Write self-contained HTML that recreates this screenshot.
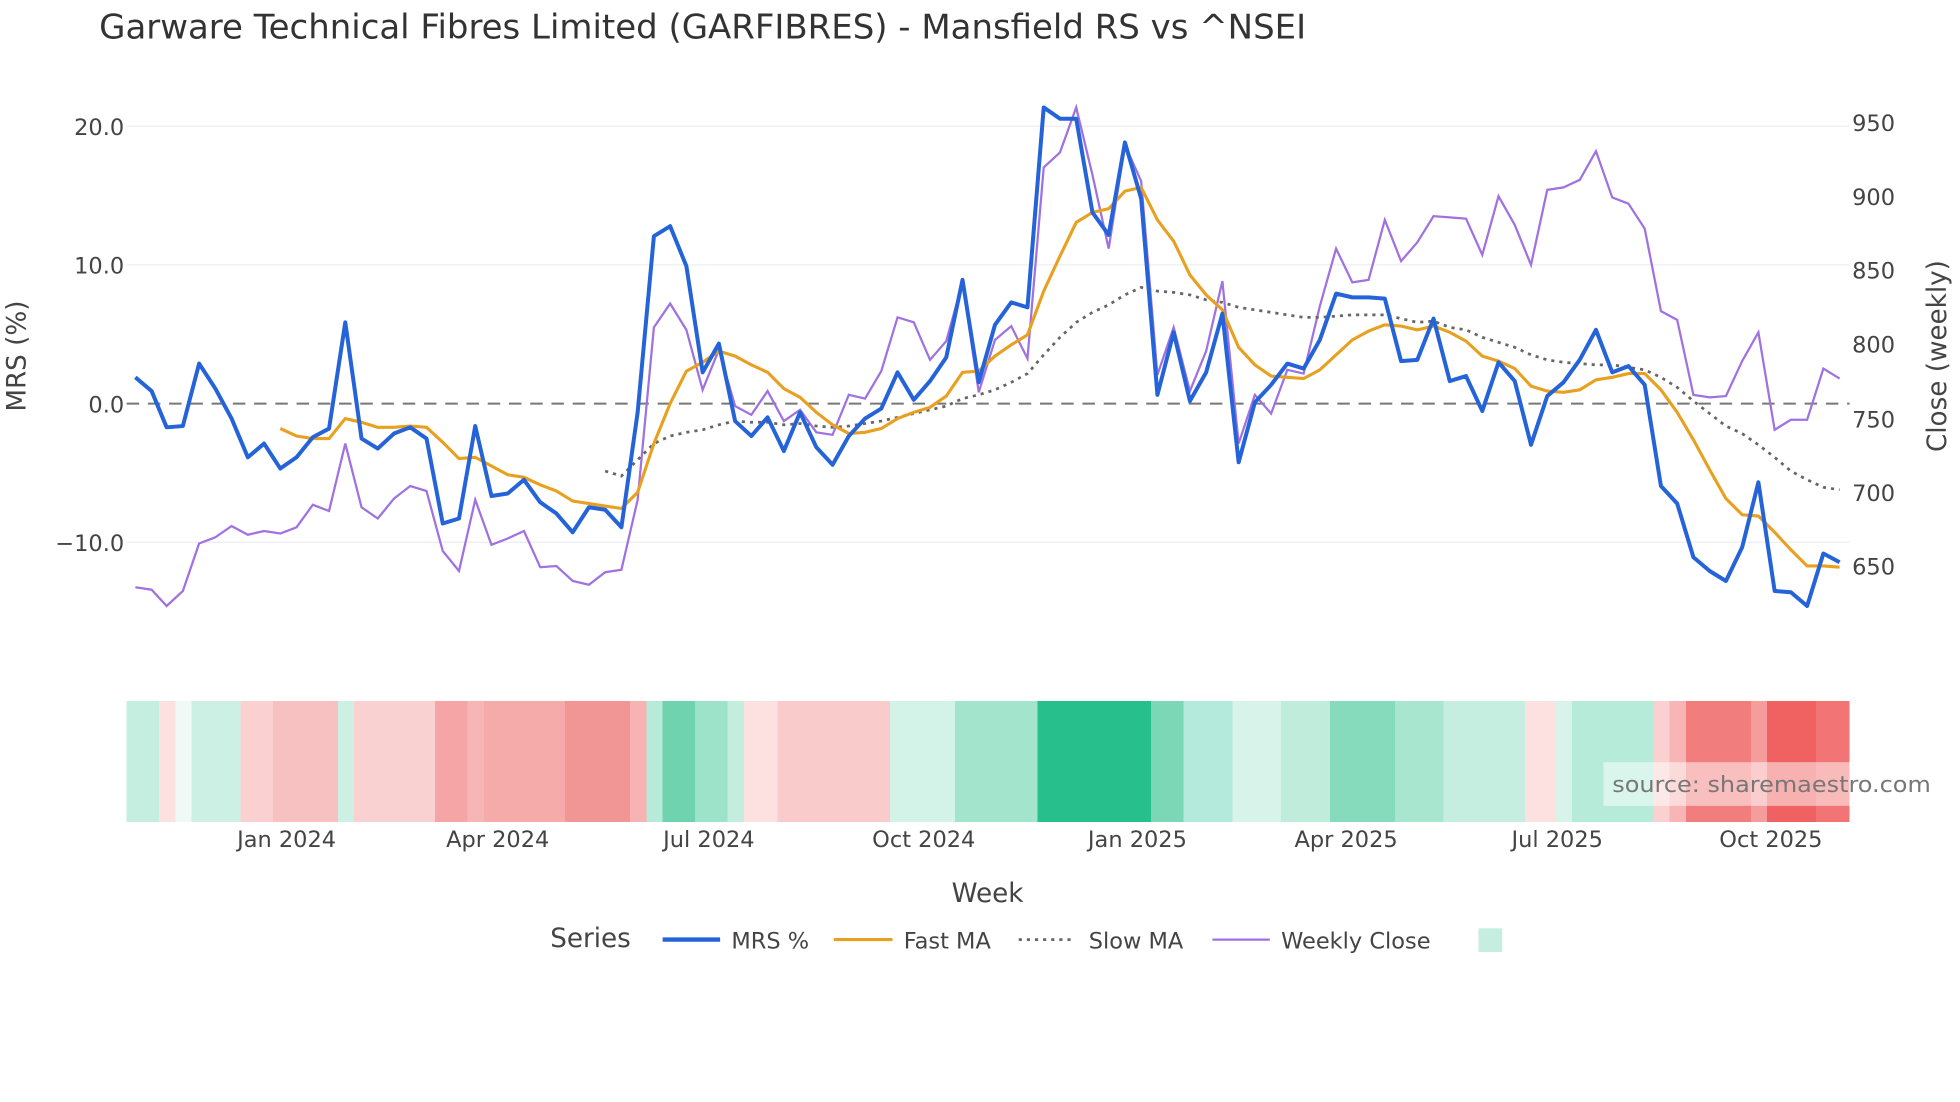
<!DOCTYPE html>
<html><head><meta charset="utf-8"><style>html,body{margin:0;padding:0;background:#fff}svg{display:block}text{font-family:"DejaVu Sans","Liberation Sans",sans-serif;fill:#2a3f5f}</style></head><body>
<svg width="1960" height="1102" viewBox="0 0 1568 882" xmlns="http://www.w3.org/2000/svg">
<rect width="1568" height="882" fill="#fff"/>
<text x="79" y="31" font-size="27" textLength="966" lengthAdjust="spacingAndGlyphs" style="fill:#333">Garware Technical Fibres Limited (GARFIBRES) - Mansfield RS vs ^NSEI</text>
<g stroke="#eceef3" stroke-width="1">
<line x1="101" x2="1480" y1="101" y2="101"/><line x1="101" x2="1480" y1="212" y2="212"/><line x1="101" x2="1480" y1="434" y2="434"/>
</g>
<line x1="101" x2="1480" y1="323" y2="323" stroke="#777" stroke-width="1.6" stroke-dasharray="10,7"/>
<g font-size="18" text-anchor="end" style="fill:#444">
<text x="99" y="108" style="fill:#444">20.0</text><text x="99" y="219" style="fill:#444">10.0</text><text x="99" y="330" style="fill:#444">0.0</text><text x="99" y="441" style="fill:#444">−10.0</text>
</g>
<g font-size="18" style="fill:#444">
<text x="1482" y="105" style="fill:#444">950</text><text x="1482" y="164" style="fill:#444">900</text><text x="1482" y="223" style="fill:#444">850</text><text x="1482" y="282" style="fill:#444">800</text><text x="1482" y="342" style="fill:#444">750</text><text x="1482" y="401" style="fill:#444">700</text><text x="1482" y="460" style="fill:#444">650</text>
</g>
<text transform="translate(20,285) rotate(-90)" font-size="21" text-anchor="middle" style="fill:#444">MRS (%)</text>
<text transform="translate(1557,285) rotate(-90)" font-size="21" text-anchor="middle" style="fill:#444">Close (weekly)</text>

<polyline fill="none" stroke="#a071e0" stroke-width="1.8" points="108,470 121,472 133,485 146,473 159,435 172,430 185,421 198,428 211,425 224,427 237,422 250,404 263,409 276,355 289,406 302,415 315,399 328,389 341,393 354,441 367,457 380,400 393,436 406,431 419,425 432,454 445,453 458,465 471,468 484,458 497,456 510,400 523,262 536,243 549,264 562,312 575,280 588,325 601,332 614,313 627,337 640,328 653,346 666,348 679,316 692,319 705,297 718,254 731,258 744,288 757,273 770,226 783,314 796,272 809,261 822,287 835,134 848,122 861,86 874,140 887,199 900,116 913,145 926,300 939,262 952,313 965,281 978,225 991,355 1004,316 1017,331 1030,296 1043,299 1056,245 1069,199 1082,226 1095,224 1108,176 1121,209 1134,194 1147,173 1160,174 1173,175 1186,204 1199,157 1212,180 1225,212 1238,152 1251,150 1264,144 1277,121 1290,158 1303,163 1316,183 1329,249 1342,256 1355,316 1368,318 1381,317 1394,289 1407,266 1420,344 1433,336 1446,336 1459,295 1472,303"/>
<polyline fill="none" stroke="#666" stroke-width="2.2" stroke-dasharray="2.5,4" points="484,377 497,381 510,368 523,355 536,349 549,346 562,344 575,340 588,337 601,338 614,338 627,340 640,339 653,341 666,342 679,341 692,339 705,337 718,334 731,331 744,328 757,325 770,319 783,316 796,312 809,306 822,299 835,284 848,270 861,258 874,250 887,244 900,236 913,230 926,233 939,234 952,236 965,240 978,242 991,246 1004,248 1017,250 1030,252 1043,254 1056,254 1069,253 1082,252 1095,252 1108,252 1121,255 1134,258 1147,257 1160,262 1173,264 1186,270 1199,274 1212,278 1225,284 1238,288 1251,290 1264,291 1277,292 1290,292 1303,294 1316,296 1329,302 1342,310 1355,321 1368,331 1381,341 1394,347 1407,356 1420,366 1433,377 1446,384 1459,390 1472,392"/>
<polyline fill="none" stroke="#e8a020" stroke-width="2.5" points="224,343 237,349 250,351 263,351 276,335 289,338 302,342 315,342 328,341 341,342 354,354 367,367 380,366 393,373 406,380 419,382 432,388 445,393 458,401 471,403 484,405 497,407 510,394 523,355 536,323 549,297 562,290 575,281 588,285 601,292 614,298 627,311 640,318 653,330 666,340 679,347 692,346 705,343 718,335 731,330 744,326 757,317 770,298 783,297 796,285 809,276 822,268 835,233 848,205 861,178 874,170 887,167 900,153 913,150 926,176 939,193 952,220 965,236 978,248 991,278 1004,292 1017,301 1030,302 1043,303 1056,296 1069,284 1082,272 1095,265 1108,260 1121,261 1134,264 1147,261 1160,266 1173,273 1186,285 1199,289 1212,295 1225,309 1238,313 1251,314 1264,312 1277,304 1290,302 1303,299 1316,299 1329,312 1342,330 1355,352 1368,376 1381,399 1394,412 1407,413 1420,426 1433,440 1446,453 1459,453 1472,454"/>
<polyline fill="none" stroke="#2563d9" stroke-width="3.2" stroke-linejoin="round" points="108,302 121,313 133,342 146,341 159,291 172,311 185,335 198,366 211,355 224,375 237,366 250,350 263,343 276,258 289,351 302,359 315,347 328,342 341,351 354,419 367,415 380,341 393,397 406,395 419,384 432,402 445,411 458,426 471,406 484,408 497,422 510,330 523,189 536,181 549,213 562,298 575,275 588,337 601,349 614,334 627,361 640,330 653,358 666,372 679,349 692,335 705,327 718,298 731,320 744,305 757,286 770,224 783,306 796,260 809,242 822,246 835,86 848,95 861,95 874,170 887,188 900,114 913,159 926,316 939,266 952,321 965,298 978,251 991,370 1004,322 1017,308 1030,291 1043,295 1056,272 1069,235 1082,238 1095,238 1108,239 1121,289 1134,288 1147,255 1160,305 1173,301 1186,329 1199,290 1212,305 1225,356 1238,317 1251,306 1264,288 1277,264 1290,298 1303,293 1316,308 1329,389 1342,403 1355,446 1368,457 1381,465 1394,438 1407,386 1420,473 1433,474 1446,485 1459,443 1472,450"/>

<g shape-rendering="crispEdges">
<rect x="101" y="561" width="26" height="97" fill="#c6eee0"/>
<rect x="127" y="561" width="13" height="97" fill="#fde1e1"/>
<rect x="140" y="561" width="13" height="97" fill="#f0f9f5"/>
<rect x="153" y="561" width="39" height="97" fill="#cdf0e4"/>
<rect x="192" y="561" width="26" height="97" fill="#fad0d0"/>
<rect x="218" y="561" width="52" height="97" fill="#f8c1c1"/>
<rect x="270" y="561" width="13" height="97" fill="#cdf0e4"/>
<rect x="283" y="561" width="65" height="97" fill="#f9d1d1"/>
<rect x="348" y="561" width="26" height="97" fill="#f5a5a5"/>
<rect x="374" y="561" width="13" height="97" fill="#f7b6b6"/>
<rect x="387" y="561" width="65" height="97" fill="#f6abab"/>
<rect x="452" y="561" width="52" height="97" fill="#f29595"/>
<rect x="504" y="561" width="13" height="97" fill="#f7b3b3"/>
<rect x="517" y="561" width="13" height="97" fill="#b8eada"/>
<rect x="530" y="561" width="26" height="97" fill="#6fd3af"/>
<rect x="556" y="561" width="26" height="97" fill="#9ce3c9"/>
<rect x="582" y="561" width="13" height="97" fill="#c4eddd"/>
<rect x="595" y="561" width="27" height="97" fill="#fde0e0"/>
<rect x="622" y="561" width="90" height="97" fill="#f9cbcb"/>
<rect x="712" y="561" width="52" height="97" fill="#d3f3e8"/>
<rect x="764" y="561" width="66" height="97" fill="#a2e4cc"/>
<rect x="830" y="561" width="91" height="97" fill="#27c08c"/>
<rect x="921" y="561" width="26" height="97" fill="#7bd7b6"/>
<rect x="947" y="561" width="39" height="97" fill="#b3eadb"/>
<rect x="986" y="561" width="39" height="97" fill="#d8f4ea"/>
<rect x="1025" y="561" width="39" height="97" fill="#c0ecdc"/>
<rect x="1064" y="561" width="52" height="97" fill="#86dbbd"/>
<rect x="1116" y="561" width="39" height="97" fill="#a8e6cf"/>
<rect x="1155" y="561" width="65" height="97" fill="#c6eee0"/>
<rect x="1220" y="561" width="25" height="97" fill="#fde0e0"/>
<rect x="1245" y="561" width="13" height="97" fill="#d8f4ea"/>
<rect x="1258" y="561" width="65" height="97" fill="#b5ebd8"/>
<rect x="1323" y="561" width="13" height="97" fill="#fad0d0"/>
<rect x="1336" y="561" width="13" height="97" fill="#f7b5b5"/>
<rect x="1349" y="561" width="52" height="97" fill="#f27d7d"/>
<rect x="1401" y="561" width="13" height="97" fill="#f59c9c"/>
<rect x="1414" y="561" width="39" height="97" fill="#f06262"/>
<rect x="1453" y="561" width="27" height="97" fill="#f27474"/>
</g>
<rect x="1283" y="610" width="264" height="35" fill="#fff" fill-opacity="0.5"/>
<text x="1290" y="634" font-size="18" textLength="255" lengthAdjust="spacingAndGlyphs" style="fill:#777">source: sharemaestro.com</text>

<g font-size="18" text-anchor="middle" style="fill:#444">
<text x="229" y="678" style="fill:#444">Jan 2024</text><text x="398" y="678" style="fill:#444">Apr 2024</text><text x="567" y="678" style="fill:#444">Jul 2024</text><text x="739" y="678" style="fill:#444">Oct 2024</text><text x="910" y="678" style="fill:#444">Jan 2025</text><text x="1077" y="678" style="fill:#444">Apr 2025</text><text x="1246" y="678" style="fill:#444">Jul 2025</text><text x="1417" y="678" style="fill:#444">Oct 2025</text>
</g>
<text x="790" y="722" font-size="21" text-anchor="middle" style="fill:#444">Week</text>
<text x="440" y="758" font-size="21" style="fill:#444">Series</text>
<line x1="530" x2="576" y1="752" y2="752" stroke="#2563d9" stroke-width="3.5"/>
<text x="585" y="759" font-size="18" style="fill:#444">MRS %</text>
<line x1="667" x2="714" y1="752" y2="752" stroke="#e8a020" stroke-width="2.5"/>
<text x="723" y="759" font-size="18" style="fill:#444">Fast MA</text>
<line x1="815" x2="860" y1="752" y2="752" stroke="#666" stroke-width="2.2" stroke-dasharray="2.5,4"/>
<text x="871" y="759" font-size="18" style="fill:#444">Slow MA</text>
<line x1="970" x2="1016" y1="752" y2="752" stroke="#a071e0" stroke-width="1.8"/>
<text x="1025" y="759" font-size="18" style="fill:#444">Weekly Close</text>
<rect x="1183" y="743" width="19" height="19" fill="#c6eee0"/>
</svg>
</body></html>
